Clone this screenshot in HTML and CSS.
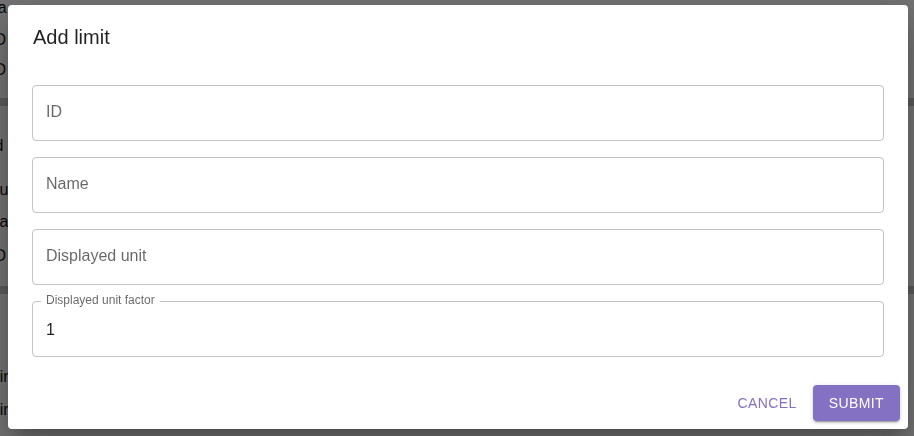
FILE: index.html
```html
<!DOCTYPE html>
<html lang="en">
<head>
<meta charset="utf-8">
<title>Add limit</title>
<link rel="stylesheet" href="styles.css">
</head>
<body>
<div class="page">
  <div class="bg-row r1">Yara</div>
  <div class="bg-row r2">OD</div>
  <div class="bg-row r3">OD</div>
  <div class="bg-band b1"></div>
  <div class="bg-row r4">Od</div>
  <div class="bg-row r5">Du</div>
  <div class="bg-row r6">Da</div>
  <div class="bg-row r7">OD</div>
  <div class="bg-band b2"></div>
  <div class="bg-row r8">Air</div>
  <div class="bg-row r9">Air</div>
</div>
<div class="backdrop"></div>
<div class="dialog" role="dialog" aria-labelledby="dlg-title">
  <h2 class="dialog-title" id="dlg-title">Add limit</h2>
  <div class="dialog-content">
    <div class="field"><span class="placeholder">ID</span></div>
    <div class="field"><span class="placeholder">Name</span></div>
    <div class="field"><span class="placeholder">Displayed unit</span></div>
    <div class="field filled">
      <span class="float-label">Displayed unit factor</span>
      <span class="value">1</span>
    </div>
  </div>
  <div class="dialog-actions">
    <button class="btn btn-text" type="button">Cancel</button>
    <button class="btn btn-contained" type="button">Submit</button>
  </div>
</div>
</body>
</html>
```

FILE: styles.css
```css
html, body {
  margin: 0;
  padding: 0;
}

body {
  width: 914px;
  height: 436px;
  overflow: hidden;
  background: #e6e6e6;
  font-family: "Liberation Sans", Arial, Helvetica, sans-serif;
}

.page {
  display: flex;
  flex-direction: column;
  color: #111;
  font-size: 16px;
}

.bg-row {
  height: 32px;
  line-height: 32px;
  margin-left: -7px;
  white-space: nowrap;
}

.r1 { height: 16px; line-height: 16px; margin-left: -26px; }
.r2 { margin-top: 8px; margin-left: -18px; }
.r3 { margin-top: -2px; margin-left: -18px; }
.bg-band {
  height: 8px;
  background: #b4b4b4;
}
.b1 { margin-top: 12px; }
.r4 { margin-top: 24px; margin-left: -18px; }
.r5 { margin-top: 12px; margin-left: -12px; }
.r6 { margin-top: 0; margin-left: -12px; }
.r7 { margin-top: 2px; margin-left: -18px; }
.b2 { margin-top: 14px; }
.r8 { margin-top: 67px; margin-left: -11px; }
.r9 { margin-top: 1px; margin-left: -11px; }

.backdrop {
  position: fixed;
  inset: 0;
  background: rgba(0, 0, 0, 0.5);
}

.dialog {
  position: fixed;
  left: 8px;
  top: 5px;
  width: 900px;
  box-sizing: border-box;
  background: #fff;
  border-radius: 4px;
  display: flex;
  flex-direction: column;
  box-shadow: 0 11px 15px -7px rgba(0,0,0,0.2),
              0 24px 38px 3px rgba(0,0,0,0.14),
              0 9px 46px 8px rgba(0,0,0,0.12);
}

.dialog-title {
  margin: 0;
  padding: 16px 24px 16px 25px;
  font-size: 20px;
  line-height: 32px;
  font-weight: 500;
  color: rgba(0, 0, 0, 0.87);
}

.dialog-content {
  padding: 16px 24px 20px;
  display: flex;
  flex-direction: column;
  gap: 16px;
}

.field {
  position: relative;
  height: 56px;
  box-sizing: border-box;
  border: 1px solid rgba(0, 0, 0, 0.23);
  border-radius: 4px;
  padding: 0 13px;
  display: flex;
  align-items: center;
  font-size: 16px;
}

.placeholder {
  color: rgba(0, 0, 0, 0.6);
  line-height: 23px;
  margin-top: -3px;
}

.value {
  color: rgba(0, 0, 0, 0.87);
  line-height: 23px;
}

.float-label {
  position: absolute;
  left: 8px;
  top: -10px;
  padding: 0 5px;
  background: #fff;
  font-size: 12px;
  line-height: 17px;
  color: rgba(0, 0, 0, 0.6);
}

.dialog-actions {
  display: flex;
  justify-content: flex-end;
  align-items: center;
  gap: 8px;
  padding: 8px;
}

.btn {
  font-family: inherit;
  font-size: 14px;
  font-weight: 500;
  line-height: 24px;
  letter-spacing: 0.02857em;
  text-transform: uppercase;
  border: 0;
  border-radius: 4px;
  min-width: 64px;
  height: 36px;
  box-sizing: border-box;
  cursor: pointer;
}

.btn-text {
  background: transparent;
  color: #8471c3;
  padding: 6px 8px;
}

.btn-contained {
  background: #8471c3;
  color: #fff;
  padding: 6px 16px;
  box-shadow: 0 3px 1px -2px rgba(0,0,0,0.2),
              0 2px 2px 0 rgba(0,0,0,0.14),
              0 1px 5px 0 rgba(0,0,0,0.12);
}
```
